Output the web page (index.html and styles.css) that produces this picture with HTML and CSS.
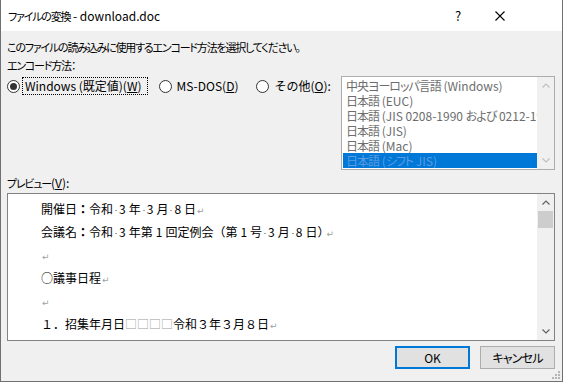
FILE: index.html
```html
<!DOCTYPE html>
<html lang="ja">
<head>
    <meta charset="UTF-8">
    <title>ファイルの変換 - download.doc</title>
    <link rel="stylesheet" href="styles.css">
</head>
<body>
    <div class="dialog">
        <div class="titlebar">
            <span class="title"><span class="ja">ファイルの変換</span> - download.doc</span>
            <span class="help">?</span>
            <span class="close">
                <svg width="10" height="10" viewBox="0 0 10 10"><path d="M0.5 0.5L9.5 9.5M9.5 0.5L0.5 9.5" stroke="#000" stroke-width="1.1"/></svg>
            </span>
        </div>

        <div class="content">
            <p class="line"><span class="ja">このファイルの読み込みに使用するエンコード方法を選択してください。</span></p>
            <p class="line"><span class="ja">エンコード方法：</span></p>

            <div class="encoding">
                <div class="options">
                    <label class="option">
                        <span class="radio checked"></span>
                        <span class="option-text focused">Windows (既定値)(<u>W</u>)</span>
                    </label>
                    <label class="option">
                        <span class="radio"></span>
                        <span class="option-text">MS-DOS(<u>D</u>)</span>
                    </label>
                    <label class="option">
                        <span class="radio"></span>
                        <span class="option-text">その他(<u>O</u>):</span>
                    </label>
                </div>

                <div class="listbox">
                    <ul class="list-items">
                        <li><span class="ja-list">中央ヨーロッパ言語</span> (Windows)</li>
                        <li><span class="ja-list">日本語</span> (EUC)</li>
                        <li><span class="ja-list">日本語</span> (JIS 0208-1990 <span class="ja-list">および</span> 0212-1990)</li>
                        <li><span class="ja-list">日本語</span> (JIS)</li>
                        <li><span class="ja-list">日本語</span> (Mac)</li>
                        <li class="selected"><span class="ja-list">日本語</span> (<span class="ja-list">シフト</span> JIS)</li>
                    </ul>
                    <div class="scrollbar disabled">
                        <span class="arrow"><svg width="8" height="5" viewBox="0 0 8 5"><path d="M0.5 4.5L4 1L7.5 4.5" fill="none" stroke="currentColor" stroke-width="1.2"/></svg></span>
                        <span class="track"></span>
                        <span class="arrow"><svg width="8" height="5" viewBox="0 0 8 5"><path d="M0.5 0.5L4 4L7.5 0.5" fill="none" stroke="currentColor" stroke-width="1.2"/></svg></span>
                    </div>
                </div>
            </div>

            <p class="line preview-label"><span class="ja">プレビュー</span>(<u>V</u>):</p>

            <div class="preview">
                <div class="preview-text">
                    <p>開催日<b>：</b>令和<span class="sp"></span>3<span class="gap"></span>年<span class="sp"></span>3<span class="gap"></span>月<span class="sp"></span>8<span class="gap"></span>日<span class="ret">↵</span></p>
                    <p>会議名<b>：</b>令和<span class="sp"></span>3<span class="gap"></span>年第<span class="gap"></span>1<span class="gap"></span>回定例会（第<span class="gap"></span>1<span class="gap"></span>号<span class="sp"></span>3<span class="gap"></span>月<span class="sp"></span>8<span class="gap"></span>日<span class="paren">）</span><span class="ret">↵</span></p>
                    <p><span class="ret">↵</span></p>
                    <p>○議事日程<span class="ret">↵</span></p>
                    <p><span class="ret">↵</span></p>
                    <p>１．招集年月日<span class="box">□□□□</span>令和３年３月８日<span class="ret">↵</span></p>
                </div>
                <div class="scrollbar">
                    <span class="arrow"><svg width="8" height="5" viewBox="0 0 8 5"><path d="M0.5 4.5L4 1L7.5 4.5" fill="none" stroke="currentColor" stroke-width="1.2"/></svg></span>
                    <span class="thumb"></span>
                    <span class="track"></span>
                    <span class="arrow"><svg width="8" height="5" viewBox="0 0 8 5"><path d="M0.5 0.5L4 4L7.5 0.5" fill="none" stroke="currentColor" stroke-width="1.2"/></svg></span>
                </div>
            </div>

            <div class="buttons">
                <button class="default">OK</button>
                <button><span class="ja-tight">キャンセル</span></button>
            </div>
        </div>

        <svg class="grip" width="10" height="10" viewBox="0 0 10 10">
            <rect x="7" y="1" width="2" height="2" fill="#b4b4b4"/>
            <rect x="4" y="4" width="2" height="2" fill="#b4b4b4"/>
            <rect x="7" y="4" width="2" height="2" fill="#b4b4b4"/>
            <rect x="1" y="7" width="2" height="2" fill="#b4b4b4"/>
            <rect x="4" y="7" width="2" height="2" fill="#b4b4b4"/>
            <rect x="7" y="7" width="2" height="2" fill="#b4b4b4"/>
        </svg>
    </div>
</body>
</html>
```

FILE: styles.css
```css
:root {
    --face-color: #f0f0f0;
    --frame-color: #707070;
    --text-color: #000;
    --disabled-text: #6d6d6d;
    --accent-color: #0078d7;
    --mark-color: #a0a0a0;
}

* {
    margin: 0;
    padding: 0;
    box-sizing: border-box;
}

body {
    font-family: "Noto Sans CJK JP", "Noto Sans", sans-serif;
    font-size: 12px;
    color: var(--text-color);
    background-color: var(--face-color);
}

/* UI font is narrower on kana than Noto, so tighten Japanese runs */
.ja {
    font-size: 11px;
    font-feature-settings: "palt";
    letter-spacing: -1.2px;
}

.ja-list {
    font-feature-settings: "palt";
    letter-spacing: -1px;
}

.ja-tight {
    font-feature-settings: "palt";
    letter-spacing: -0.8px;
}

.dialog {
    position: relative;
    width: 563px;
    height: 382px;
    border: 1px solid var(--frame-color);
    border-top: none;
    display: flex;
    flex-direction: column;
    background-color: var(--face-color);
}

.titlebar {
    height: 31px;
    flex-shrink: 0;
    background-color: #fff;
    display: flex;
    align-items: center;
    padding-left: 7px;
    padding-right: 41px;
}

.title {
    flex: 1;
    line-height: 18px;
}

.help,
.close {
    width: 42px;
    display: flex;
    justify-content: center;
    align-items: center;
    font-size: 13px;
}

.content {
    flex: 1;
    padding: 7px 7px 0 6px;
    display: flex;
    flex-direction: column;
}

.line {
    line-height: 18px;
}

.encoding {
    display: flex;
    align-items: flex-start;
    margin-top: 2px;
}

.options {
    display: flex;
    align-items: center;
    margin-top: 1px;
    height: 18px;
}

.option {
    display: flex;
    align-items: center;
    height: 18px;
}

.option + .option {
    margin-left: 11px;
}

.option:last-child {
    margin-left: 15px;
}

.radio {
    width: 13px;
    height: 13px;
    border: 1px solid #333;
    border-radius: 50%;
    background-color: #fff;
    display: flex;
    justify-content: center;
    align-items: center;
}

.radio.checked::after {
    content: "";
    width: 7px;
    height: 7px;
    border-radius: 50%;
    background-color: #333;
}

.option-text {
    margin-left: 2px;
    padding: 0 2px;
    line-height: 16px;
    border: 1px solid transparent;
}

.option-text.focused {
    border: 1px dotted #000;
    padding-right: 5px;
}

.listbox {
    margin-left: auto;
    width: 214px;
    height: 94px;
    border: 1px solid #adadad;
    background-color: #fff;
    display: flex;
    padding: 1px 0 1px 1px;
}

.list-items {
    flex: 1;
    list-style: none;
    overflow: hidden;
}

.list-items li {
    height: 15px;
    line-height: 15px;
    padding-left: 3px;
    white-space: nowrap;
    overflow: hidden;
    color: var(--disabled-text);
}

.list-items li.selected {
    background-color: var(--accent-color);
    color: #5f9be0;
}

.scrollbar {
    width: 17px;
    display: flex;
    flex-direction: column;
    background-color: var(--face-color);
    color: #606060;
}

.listbox .scrollbar {
    margin-top: -1px;
    margin-bottom: -1px;
}

.scrollbar.disabled {
    color: #bfbfbf;
}

.scrollbar .arrow {
    height: 17px;
    display: flex;
    justify-content: center;
    align-items: center;
}

.scrollbar .track {
    flex: 1;
}

.scrollbar .thumb {
    height: 17px;
    margin: 0 1px;
    background-color: #cdcdcd;
}

.preview-label {
    margin-top: 4px;
}

.preview {
    margin-top: 1px;
    height: 148px;
    border: 1px solid #828282;
    background-color: #fff;
    display: flex;
}

.preview-text {
    flex: 1;
    padding: 3px 0 0 33px;
    overflow: hidden;
}

.preview-text p {
    height: 23px;
    line-height: 23px;
    white-space: nowrap;
}

.preview-text b {
    font-weight: 700;
}

/* space mark: small grey dot between words */
.sp {
    display: inline-block;
    width: 6px;
    height: 1px;
    vertical-align: middle;
    background: linear-gradient(var(--mark-color), var(--mark-color)) center / 2px 1px no-repeat;
}

.gap {
    display: inline-block;
    width: 3px;
}

.paren {
    letter-spacing: -5px;
}

.ret {
    color: var(--mark-color);
    font-family: "DejaVu Sans", sans-serif;
    font-size: 9px;
    margin-left: 1px;
}

.paren + .ret {
    margin-left: 2px;
}

.box {
    color: var(--mark-color);
}

.buttons {
    margin-top: 5px;
    display: flex;
    justify-content: flex-end;
    gap: 10px;
}

button {
    width: 75px;
    height: 23px;
    font-family: inherit;
    font-size: 12px;
    color: var(--text-color);
    background-color: #e1e1e1;
    border: 1px solid #adadad;
}

button.default {
    border: 2px solid var(--accent-color);
}

.grip {
    position: absolute;
    right: 1px;
    bottom: 1px;
}
```
